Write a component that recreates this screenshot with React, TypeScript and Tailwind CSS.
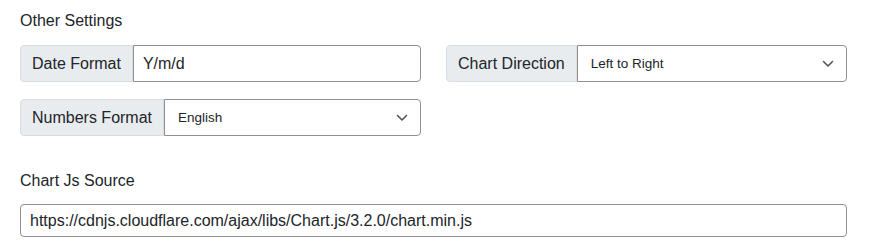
import React from 'react';

const Chevron = () => (
  <svg width="12" height="8" viewBox="0 0 12 8" className="shrink-0">
    <path d="M1.5 1.5 L6 6 L10.5 1.5" fill="none" stroke="#555" strokeWidth="1.6" strokeLinecap="round" strokeLinejoin="round" />
  </svg>
);

const GroupLabel = ({ children }: { children: React.ReactNode }) => (
  <div className="flex items-center px-[11px] bg-[#e9ecef] border border-[#d9dde1] rounded-l-[4px] text-[16px] text-[#212529] whitespace-nowrap">
    {children}
  </div>
);

const SelectBox = ({ value }: { value: string }) => (
  <div className="flex-1 flex items-center justify-between pl-[13px] pr-[12px] bg-white border border-[#8f8f8f] rounded-r-[4px] text-[13.5px] text-[#212529]">
    <span className="pt-[2px]">{value}</span>
    <Chevron />
  </div>
);

export default function App() {
  return (
    <div className="w-[869px] h-[252px] bg-white pt-[9px] px-[20px] font-['Liberation_Sans',Arial,sans-serif] text-[#212529]">
      <div className="text-[16px] leading-6 mb-[12px]">Other Settings</div>

      <div className="grid grid-cols-2 gap-x-[25px] gap-y-[17px] w-[827px]">
        <div className="flex h-[37px]">
          <GroupLabel>Date Format</GroupLabel>
          <div className="flex-1 flex items-center pl-[9px] bg-white border border-[#8f8f8f] rounded-r-[4px] text-[16px]">
            Y/m/d
          </div>
        </div>

        <div className="flex h-[37px]">
          <GroupLabel>Chart Direction</GroupLabel>
          <SelectBox value="Left to Right" />
        </div>

        <div className="flex h-[37px]">
          <GroupLabel>Numbers Format</GroupLabel>
          <SelectBox value="English" />
        </div>
      </div>

      <div className="text-[16px] leading-6 mt-[33px] mb-[11px]">Chart Js Source</div>

      <div className="w-[827px] h-[33px] flex items-center pl-[9px] border border-[#8f8f8f] rounded-[4px] text-[16px]">
        https://cdnjs.cloudflare.com/ajax/libs/Chart.js/3.2.0/chart.min.js
      </div>
    </div>
  );
}
